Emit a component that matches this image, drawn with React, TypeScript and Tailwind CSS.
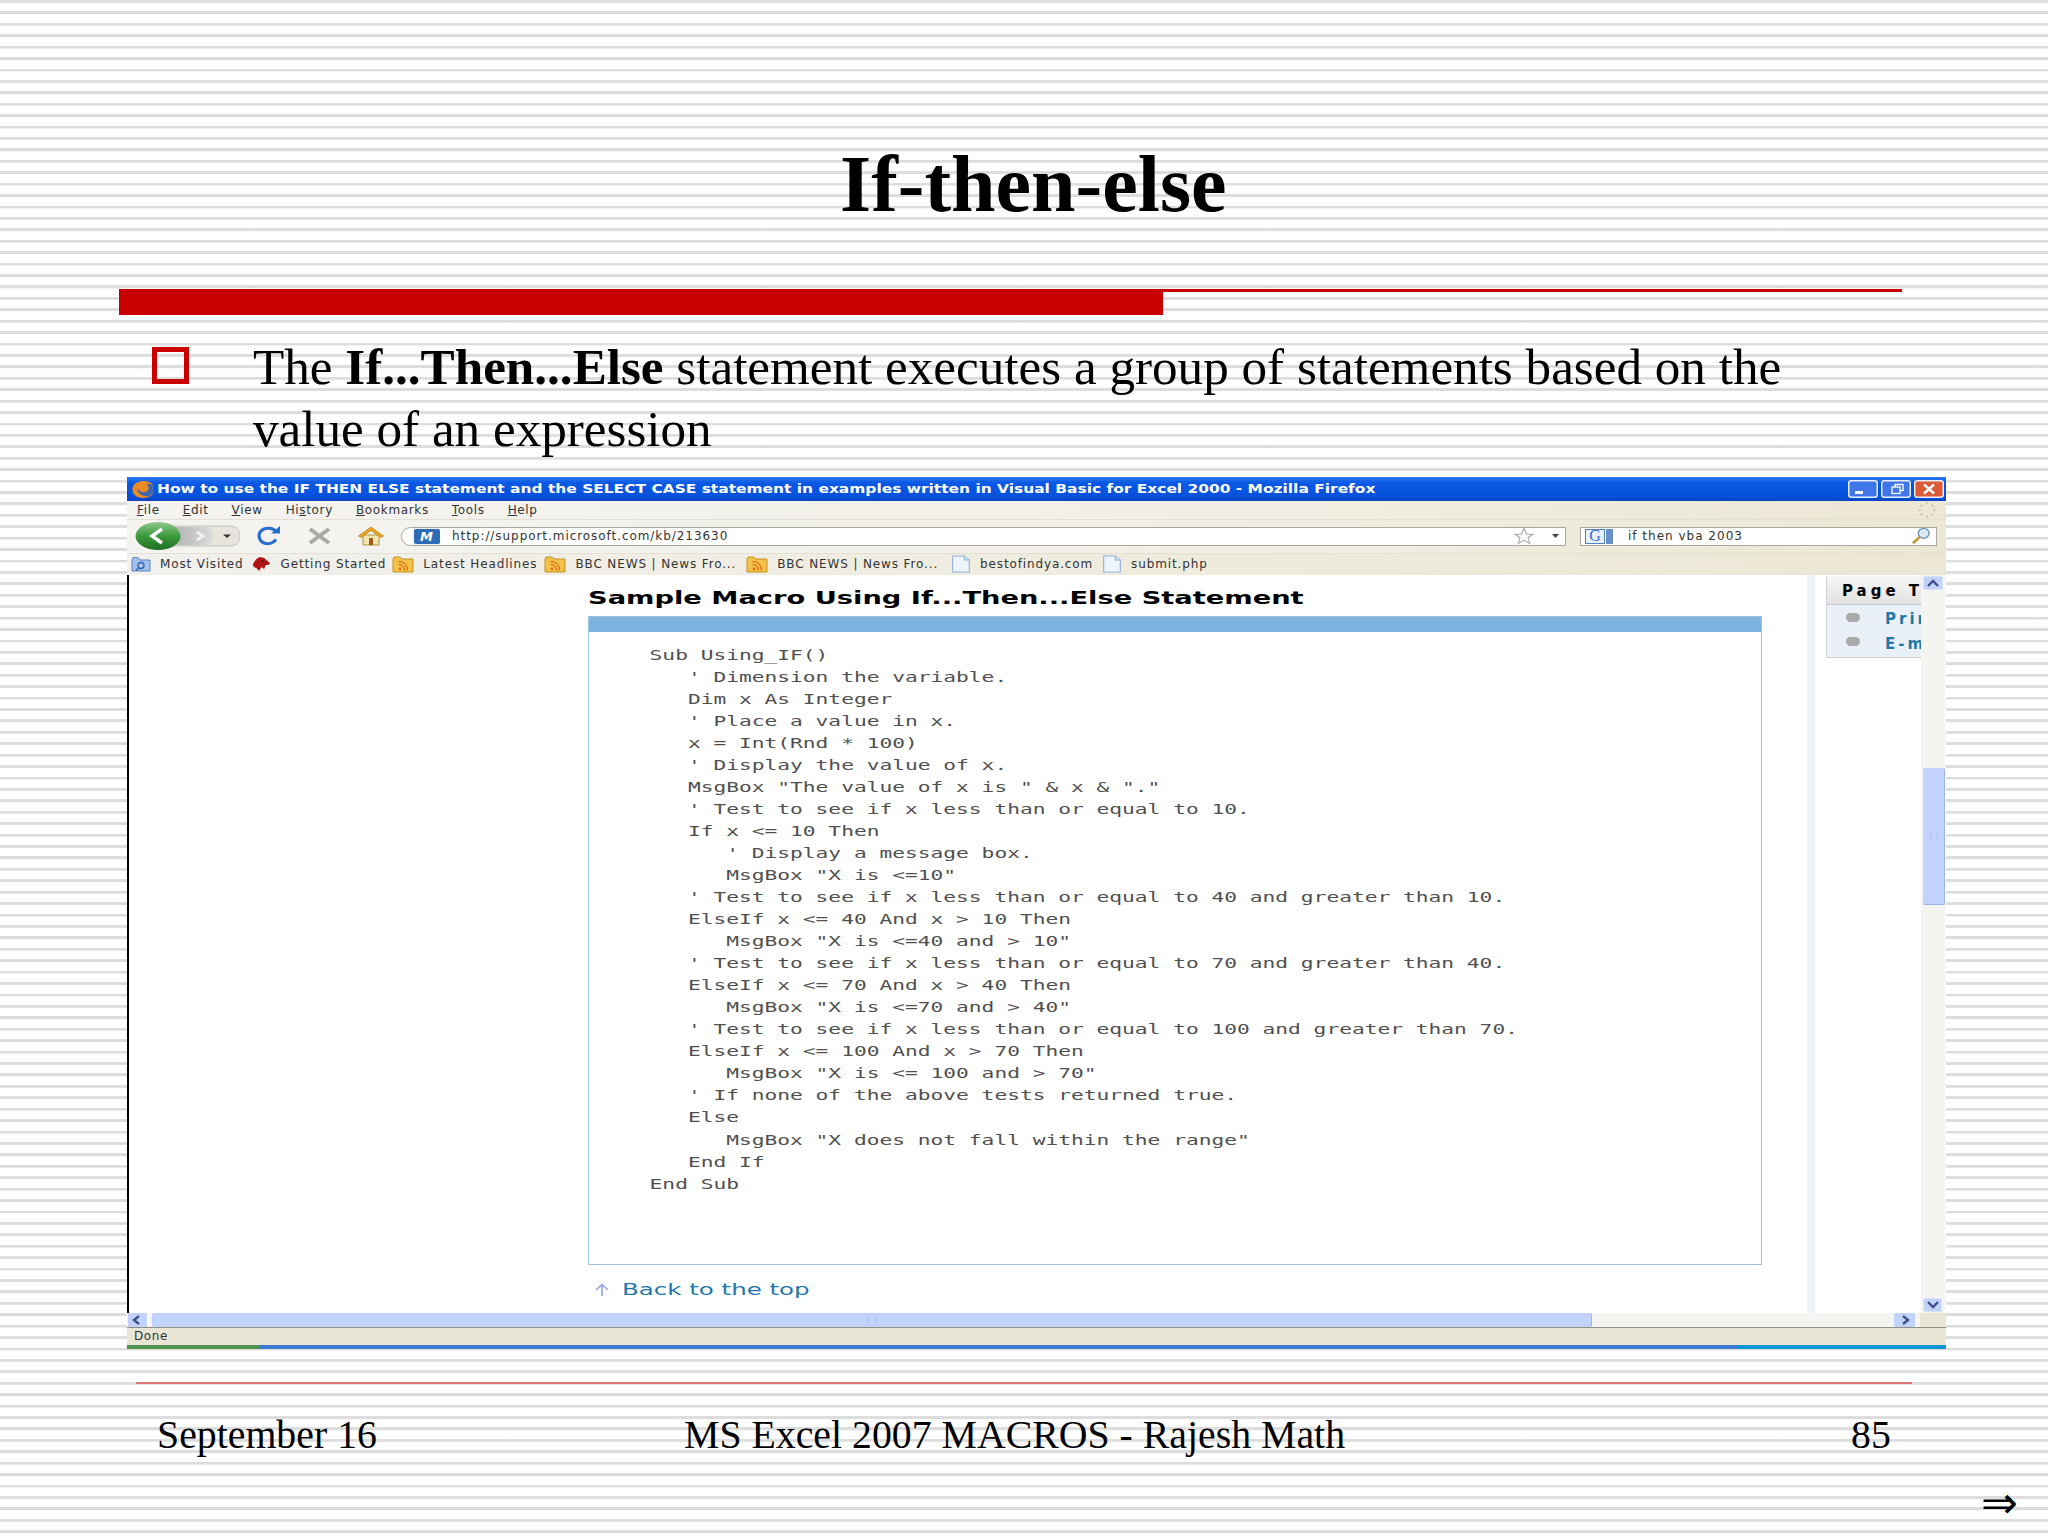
import React from "react";

const code: [number, string][] = [
  [0, "Sub Using_IF()"],
  [3, "' Dimension the variable."],
  [3, "Dim x As Integer"],
  [3, "' Place a value in x."],
  [3, "x = Int(Rnd * 100)"],
  [3, "' Display the value of x."],
  [3, 'MsgBox "The value of x is " & x & "."'],
  [3, "' Test to see if x less than or equal to 10."],
  [3, "If x <= 10 Then"],
  [6, "' Display a message box."],
  [6, 'MsgBox "X is <=10"'],
  [3, "' Test to see if x less than or equal to 40 and greater than 10."],
  [3, "ElseIf x <= 40 And x > 10 Then"],
  [6, 'MsgBox "X is <=40 and > 10"'],
  [3, "' Test to see if x less than or equal to 70 and greater than 40."],
  [3, "ElseIf x <= 70 And x > 40 Then"],
  [6, 'MsgBox "X is <=70 and > 40"'],
  [3, "' Test to see if x less than or equal to 100 and greater than 70."],
  [3, "ElseIf x <= 100 And x > 70 Then"],
  [6, 'MsgBox "X is <= 100 and > 70"'],
  [3, "' If none of the above tests returned true."],
  [3, "Else"],
  [6, 'MsgBox "X does not fall within the range"'],
  [3, "End If"],
  [0, "End Sub"],
];

const Firefox = () => (
  <svg width="25" height="17" viewBox="0 0 24 17">
    <ellipse cx="12" cy="8.5" rx="10.5" ry="7.5" fill="#3f67b0" />
    <path d="M8 3L12 2L16 4L14 7L9 6Z" fill="#c9d8ee" />
    <path d="M1 7C2 2 7 0 12 0C17 0 21 2 23 6C21 3 17 2 15 3C18 5 18 10 14 11C10 12 7 10 6 7C5 10 8 14 13 15C17 16 21 14 23 10C22 14 17 17 12 17C5 17 0 13 1 7Z" fill="#ea8a24" />
  </svg>
);

const WinBtn = ({ kind }: { kind: "min" | "max" | "close" }) => (
  <svg width="30" height="18" viewBox="0 0 30 18">
    <rect x="0.75" y="0.75" width="28.5" height="16.5" rx="2.5" fill={kind === "close" ? "#dd5a38" : "#3f76e8"} stroke="#e8eefc" strokeWidth="1.5" />
    {kind === "min" && <rect x="7" y="11" width="8" height="3" fill="#fff" />}
    {kind === "max" && (
      <g fill="none" stroke="#fff" strokeWidth="1.3">
        <rect x="11" y="7" width="8" height="6.5" />
        <path d="M14 7V4.5H22V10.5H19" />
      </g>
    )}
    {kind === "close" && <path d="M10 4.5L20 13.5M20 4.5L10 13.5" stroke="#fff" strokeWidth="2.4" />}
  </svg>
);

const NavButtons = () => (
  <svg width="105" height="28" viewBox="0 0 105 28">
    <defs>
      <linearGradient id="grn" x1="0" y1="0" x2="0" y2="1">
        <stop offset="0" stopColor="#8fc98f" />
        <stop offset="0.5" stopColor="#3c9a3c" />
        <stop offset="1" stopColor="#1f6f1f" />
      </linearGradient>
      <linearGradient id="gry" x1="0" y1="0" x2="1" y2="0">
        <stop offset="0" stopColor="#a8a8a8" />
        <stop offset="1" stopColor="#dcdcdc" />
      </linearGradient>
    </defs>
    <path d="M30 4H95C102 4 105 9 105 14C105 19 102 24 95 24H30Z" fill="#e6e4dc" stroke="#c4c2b8" />
    <path d="M30 5H70C76 5 78 10 78 14C78 18 76 23 70 23H30Z" fill="url(#gry)" />
    <path d="M62 10L68 14L62 18" fill="none" stroke="#f4f4f4" strokeWidth="2.6" />
    <path d="M88 12.5H96L92 16Z" fill="#333" />
    <ellipse cx="23" cy="14" rx="22.5" ry="14" fill="url(#grn)" />
    <path d="M27 7L17 14L27 21" fill="none" stroke="#fff" strokeWidth="3.4" />
  </svg>
);

const Reload = () => (
  <svg width="24" height="20" viewBox="0 0 24 20">
    <path d="M20 5.5C17 1.5 9 1 5 5C1.5 9 3 15 8 17C12 18.5 17 17.5 20 13.5" fill="none" stroke="#2a6fd0" strokeWidth="3.2" />
    <path d="M15 7.5H24V0Z" fill="#2a6fd0" />
  </svg>
);

const Stop = () => (
  <svg width="25" height="18" viewBox="0 0 25 18">
    <path d="M3 2L22 16M22 2L3 16" stroke="#a9a9a6" strokeWidth="4" />
  </svg>
);

const Home = () => (
  <svg width="26" height="20" viewBox="0 0 26 20">
    <path d="M5 9H21V19H5Z" fill="#f4e4b0" stroke="#b09040" />
    <rect x="11" y="12" width="4" height="7" fill="#a05a20" />
    <path d="M0.5 10L13 1L25.5 10L23 11.5L13 4.5L3 11.5Z" fill="#eaa620" stroke="#b87a10" strokeWidth="0.7" />
  </svg>
);

const Star = () => (
  <svg width="22" height="18" viewBox="0 0 22 20">
    <path d="M11 1.5L14 8H21L15.5 12L17.5 18.5L11 14.5L4.5 18.5L6.5 12L1 8H8Z" fill="#fafaf6" stroke="#aaa" strokeWidth="1.2" />
  </svg>
);

const Glass = () => (
  <svg width="22" height="18" viewBox="0 0 22 20">
    <ellipse cx="14" cy="7" rx="6" ry="5.5" fill="#dbe8f4" stroke="#6c93b8" strokeWidth="1.6" />
    <path d="M9.5 11L2 18" stroke="#c69a3a" strokeWidth="3" />
  </svg>
);

const Throbber = () => (
  <svg width="22" height="18" viewBox="0 0 22 20" fill="#d0ccbc">
    <circle cx="11" cy="2.5" r="1.5" />
    <circle cx="11" cy="17.5" r="1.5" />
    <circle cx="3" cy="10" r="1.5" />
    <circle cx="19" cy="10" r="1.5" />
    <circle cx="5" cy="5" r="1.5" />
    <circle cx="17" cy="5" r="1.5" />
    <circle cx="5" cy="15" r="1.5" />
    <circle cx="17" cy="15" r="1.5" />
  </svg>
);

const FolderBlue = () => (
  <svg width="20" height="17" viewBox="0 0 20 17">
    <path d="M1 4V15H19V4H9L7 1.5H2Z" fill="#a5c0ea" stroke="#5b82c4" />
    <circle cx="10" cy="9.5" r="3" fill="none" stroke="#2f63b5" strokeWidth="1.3" />
    <path d="M8 11.5L5 14.5" stroke="#2f63b5" strokeWidth="1.5" />
  </svg>
);

const Dog = () => (
  <svg width="19" height="17" viewBox="0 0 22 17" preserveAspectRatio="none">
    <path d="M1 8L5 3L9 1L14 2L18 5L21 7L19 9L16 9L14 13L11 11L8 15L5 12L2 11Z" fill="#b01414" />
    <circle cx="12" cy="5" r="1" fill="#300" />
  </svg>
);

const Rss = () => (
  <svg width="22" height="17" viewBox="0 0 22 17">
    <path d="M1 3V16H21V3H10L8 1H2Z" fill="#f2c24a" stroke="#c59320" />
    <circle cx="8" cy="13" r="1.4" fill="#e0761a" />
    <path d="M6.5 8.5C10 8.5 12.5 11 12.5 14.5M6.5 5.5C12 5.5 15.5 9 15.5 14.5" fill="none" stroke="#e0761a" strokeWidth="1.5" />
  </svg>
);

const PageIcon = () => (
  <svg width="20" height="18" viewBox="0 0 18 18" preserveAspectRatio="none">
    <path d="M1.5 1H12L16.5 5V17H1.5Z" fill="#eef4fb" stroke="#8fb0d4" />
    <path d="M12 1V5H16.5" fill="#cfe0f2" stroke="#8fb0d4" />
  </svg>
);

const BM = ({ icon, text, className = "" }: { icon: React.ReactNode; text: string; className?: string }) => (
  <div className={"flex items-center gap-[9px] " + className}>
    {icon}
    <span className="tracking-[0.87px] text-[#333]">{text}</span>
  </div>
);

const Chevron = ({ d }: { d: string }) => (
  <svg width="14" height="10" viewBox="0 0 14 10">
    <path d={d} fill="none" stroke="#3f4f8c" strokeWidth="2.4" />
  </svg>
);

export default function App() {
  return (
    <div className="relative w-[2048px] h-[1536px] overflow-hidden bg-white bg-[repeating-linear-gradient(180deg,#dedede_0px,#dcdcdc_2.4px,#ffffff_3.2px,#ffffff_11.42px)] font-['Liberation_Serif',serif] text-black">
      <h1 className="pt-[144px] ml-[840px] text-[80px] leading-[80px] font-bold whitespace-nowrap">If-then-else</h1>

      <div className="mt-[65px] ml-[119px] flex items-start">
        <div className="w-[1044px] h-[26px] bg-[#c80000]" />
        <div className="w-[739px] h-[3px] bg-[#c80000]" />
      </div>

      <div className="mt-[21px] ml-[152px] flex items-start">
        <div className="mt-[11px] w-[37px] h-[37px] border-[5px] border-[#c80000] shrink-0" />
        <p className="ml-[64px] text-[51.15px] leading-[62px] whitespace-nowrap">
          The <b>If...Then...Else</b> statement executes a group of statements based on the
          <br />
          value of an expression
        </p>
      </div>

      <div className="mt-[17px] ml-[127px] w-[1819px] h-[872px] flex flex-col bg-white font-['DejaVu_Sans',sans-serif]">
        {/* title bar */}
        <div className="h-[24px] shrink-0 flex items-center pl-[4px] pr-[2px] bg-[linear-gradient(180deg,#2a7af0_0%,#0a58e4_25%,#0652dc_80%,#0a45c0_100%)]">
          <Firefox />
          <span className="ml-[1px] text-[13px] font-bold text-white whitespace-nowrap origin-left scale-x-[1.187]">
            How to use the IF THEN ELSE statement and the SELECT CASE statement in examples written in Visual Basic for Excel 2000 - Mozilla Firefox
          </span>
          <div className="ml-auto flex gap-[3px]">
            <WinBtn kind="min" />
            <WinBtn kind="max" />
            <WinBtn kind="close" />
          </div>
        </div>

        {/* menu */}
        <div className="h-[18px] shrink-0 flex items-center justify-between pl-[10px] pr-[8px] text-[12px] text-[#333] bg-[linear-gradient(90deg,#f4f3f0_0%,#f2f0e8_50%,#ece7d4_100%)] tracking-[0.65px]">
          <div className="flex gap-[23px]">
            <span><u>F</u>ile</span>
            <span><u>E</u>dit</span>
            <span><u>V</u>iew</span>
            <span>Hi<u>s</u>tory</span>
            <span><u>B</u>ookmarks</span>
            <span><u>T</u>ools</span>
            <span><u>H</u>elp</span>
          </div>
          <Throbber />
        </div>

        {/* toolbar */}
        <div className="h-[34px] shrink-0 flex items-center pl-[8px] pb-[1px] border-t border-[#e4e1d4] bg-[linear-gradient(90deg,#f4f3f0_0%,#f2f0e8_50%,#ece7d4_100%)]">
          <NavButtons />
          <div className="ml-[16px] flex"><Reload /></div>
          <div className="ml-[27px] flex"><Stop /></div>
          <div className="ml-[26px] flex"><Home /></div>
          <div className="ml-[17px] w-[1165px] h-[19px] flex items-center rounded-l-[10px] border border-[#a8a89e] bg-white">
            <div className="ml-[11px] h-[17px] w-[27px] bg-[#f0f0ea] flex items-center justify-center">
              <span className="w-[26px] h-[15px] rounded-[2px] bg-[#2f6cb8] text-white text-[13px] leading-[15px] font-bold italic text-center">M</span>
            </div>
            <span className="ml-[12px] text-[12px] tracking-[0.94px] text-[#333]">http://support.microsoft.com/kb/213630</span>
            <div className="ml-auto mr-[6px] flex items-center gap-[17px]">
              <Star />
              <svg width="7" height="4" viewBox="0 0 7 4"><path d="M0 0H7L3.5 4Z" fill="#444" /></svg>
            </div>
          </div>
          <div className="ml-[14px] w-[357px] h-[19px] flex items-center border border-[#a8a89e] bg-white">
            <div className="ml-[4px] w-[20px] h-[15px] flex items-center justify-center border border-[#5080c0] bg-[#e8f0fa] text-[16px] leading-none font-['Liberation_Serif',serif] text-[#3868c8]">G</div>
            <div className="w-[8px] h-[15px] bg-[#6a90c8] border-l border-white" />
            <span className="ml-[15px] text-[12px] text-[#333] tracking-[1px]">if then vba 2003</span>
            <div className="ml-auto mr-[4px] flex"><Glass /></div>
          </div>
        </div>

        {/* bookmarks */}
        <div className="h-[22px] shrink-0 flex items-center gap-[9px] pl-[4px] pb-[1px] text-[12px] border-t border-[#e4e1d4] bg-[linear-gradient(90deg,#f1f0ed_0%,#efecdf_50%,#ece7d4_100%)]">
          <BM icon={<FolderBlue />} text="Most Visited" />
          <BM icon={<Dog />} text="Getting Started" />
          <BM icon={<Rss />} text="Latest Headlines" className="-ml-[3px]" />
          <BM icon={<Rss />} text="BBC NEWS | News Fro..." className="-ml-[2px]" />
          <BM icon={<Rss />} text="BBC NEWS | News Fro..." className="ml-[1px]" />
          <BM icon={<PageIcon />} text="bestofindya.com" className="ml-[4px]" />
          <BM icon={<PageIcon />} text="submit.php" />
        </div>

        {/* content */}
        <div className="h-[738px] shrink-0 flex border-l-2 border-black bg-white">
          <div className="w-[459px] shrink-0" />
          <div className="w-[1174px] shrink-0 flex flex-col">
            <h2 className="mt-[13px] h-[20px] text-[18px] leading-[20px] font-bold whitespace-nowrap text-black origin-left scale-x-[1.515]">
              Sample Macro Using If...Then...Else Statement
            </h2>
            <div className="mt-[8px] h-[649px] shrink-0 border border-[#9cc4e0]">
              <div className="h-[15px] bg-[#7db5e0]" />
              <div className="mt-[11.5px] pl-[40px] font-['DejaVu_Sans_Mono',monospace] text-[14px] leading-[22.04px] text-[#505050] whitespace-pre origin-left scale-x-[1.515]">
                {code.map(([indent, line], i) => (
                  <div key={i}>{" ".repeat(indent) + line}</div>
                ))}
              </div>
            </div>
            <div className="mt-[13px] flex items-center h-[24px] text-[16px] text-[#1f78a8]">
              <svg className="ml-[6px]" width="16" height="14" viewBox="0 0 16 14">
                <path d="M2 7L8 1.5L14 7M8 2V13" fill="none" stroke="#8da4e0" strokeWidth="1.6" />
              </svg>
              <span className="ml-[12px] whitespace-nowrap origin-left scale-x-[1.53]">Back to the top</span>
            </div>
          </div>
          <div className="w-[45px] shrink-0" />
          <div className="w-[8px] shrink-0 bg-[#eef4fc]" />
          <div className="w-[11px] shrink-0" />
          <div className="w-[95px] shrink-0 overflow-hidden">
            <div className="mt-[1px] h-[82px] border-l border-b border-[#cfd4da] bg-[#eaf0f7]">
              <div className="h-[29px] pl-[15px] pt-[2px] flex items-center bg-[linear-gradient(180deg,#f6f6f6,#e2e2e2)] border-b border-[#c8c8c8] text-[15px] font-bold tracking-[4px] whitespace-nowrap">Page Tools</div>
              <div className="pl-[19px] pt-[3px] flex flex-col gap-[2px] text-[15px] font-bold tracking-[3px] text-[#1f78a8] whitespace-nowrap">
                <div className="flex items-center gap-[25px]"><span className="w-[14px] h-[9px] rounded-full bg-[#aaa] shrink-0 -mt-[4px]" />Print</div>
                <div className="flex items-center gap-[25px]"><span className="w-[14px] h-[9px] rounded-full bg-[#aaa] shrink-0 -mt-[4px]" />E-mail</div>
              </div>
            </div>
          </div>
          {/* vertical scrollbar */}
          <div className="w-[24px] shrink-0 flex flex-col bg-[#f4f4f0] pl-[2px] pt-[1px] pb-[1px]">
            <div className="h-[14px] w-[20px] flex items-center justify-center rounded-[2px] bg-[#c1d3fb] border border-[#d8e2fa]"><Chevron d="M2 8L7 3L12 8" /></div>
            <div className="mt-[178px] h-[137px] bg-[#c1d3fb] border-r border-b border-[#9db4e0] flex items-center justify-center rounded-[2px]">
              <div className="w-[8px] h-[6px] border-x border-[#a9bde8]" />
            </div>
            <div className="mt-auto h-[14px] w-[19px] flex items-center justify-center rounded-[2px] bg-[#c1d3fb] border border-[#d8e2fa]"><Chevron d="M2 2L7 7L12 2" /></div>
          </div>
        </div>

        {/* horizontal scrollbar */}
        <div className="h-[15px] shrink-0 flex items-start bg-[#f4f4f0] border-b border-[#8f8f88]">
          <div className="ml-[1px] w-[21px] h-[14px] flex items-center justify-center bg-[#c1d3fb] border-r-2 border-white"><Chevron d="M9 1L4 5L9 9" /></div>
          <div className="ml-[3px] w-[1444px] h-[14px] bg-[#c1d3fb] border-r border-[#9db4e0] flex items-center justify-center rounded-[2px]">
            <div className="w-[8px] h-[6px] border-x border-[#a9bde8]" />
          </div>
          <div className="ml-[302px] w-[21px] h-[14px] flex items-center justify-center bg-[#c1d3fb] rounded-[2px]"><Chevron d="M5 1L10 5L5 9" /></div>
          <div className="ml-[5px] w-[26px] h-[14px] bg-[#e9e6d6]" />
        </div>

        {/* status bar */}
        <div className="flex-1 min-h-0 flex items-center pl-[7px] pb-[2px] text-[12px] tracking-[0.6px] text-[#333] bg-[#e9e6d6]">Done</div>
        <div className="h-[4px] shrink-0 flex">
          <div className="w-[133px] bg-[#4f9450]" />
          <div className="w-[1478px] bg-[#3a7bd0]" />
          <div className="flex-1 bg-[#0c95d8]" />
        </div>
      </div>

      <div className="mt-[33px] ml-[136px] w-[1776px] h-[2px] bg-[#dd7777]" />

      <div className="mt-[31px] ml-[157px] flex text-[39.8px] leading-[41px] whitespace-nowrap">
        <div className="w-[527px]">September 16</div>
        <div className="w-[1167px]">MS Excel 2007 MACROS - Rajesh Math</div>
        <div>85</div>
      </div>

      <div className="mt-[30px] pr-[30px] flex justify-end text-[44px] leading-[36px]">⇒</div>
    </div>
  );
}
